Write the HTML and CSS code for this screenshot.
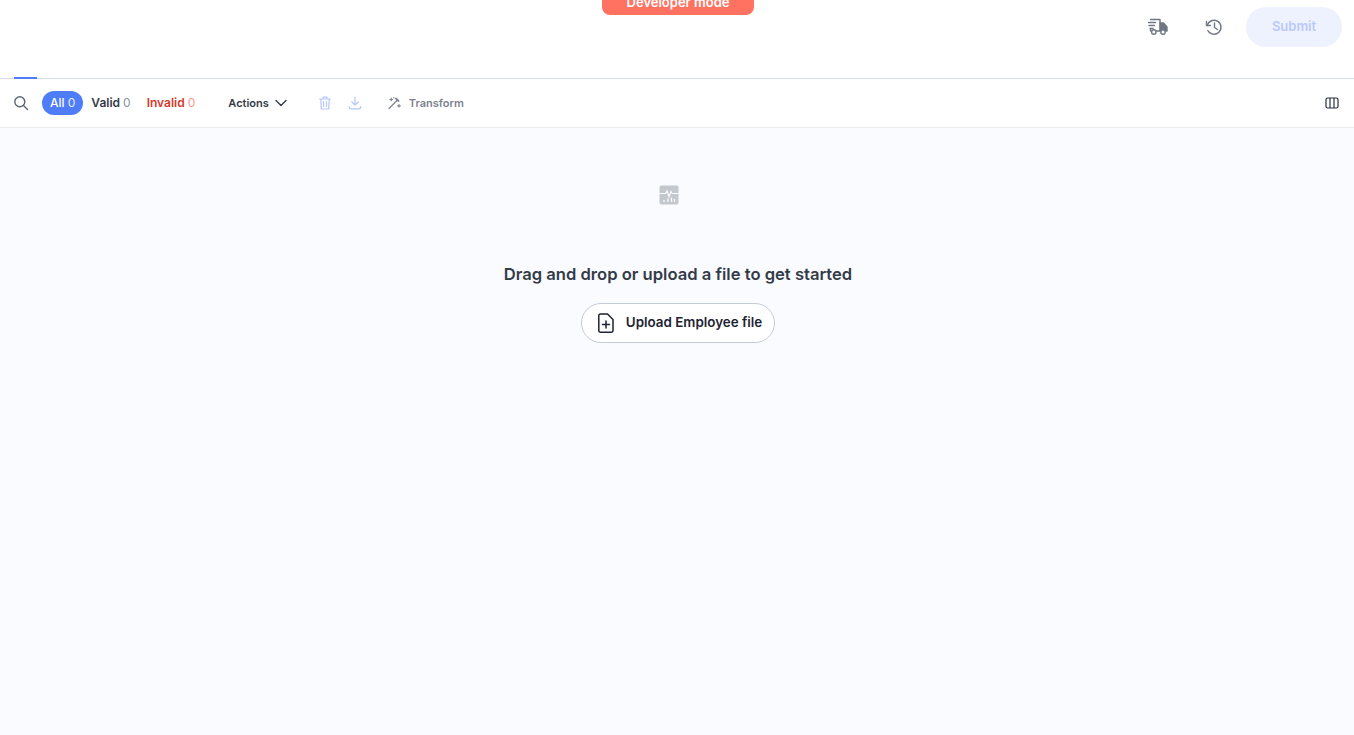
FILE: index.html
```html
<!DOCTYPE html>
<html lang="en">
<head>
  <meta charset="UTF-8" />
  <title>Employee import</title>
  <link rel="stylesheet" href="styles.css">
</head>
<body>
  <div class="dev-badge">Developer mode</div>

  <header class="topbar">
    <span class="tab-line"></span>
    <button class="icon-btn" title="Shipments">
      <svg width="22" height="22" viewBox="0 0 22 22" fill="none" stroke="#6f7785" stroke-width="1.4" stroke-linecap="round" stroke-linejoin="round">
        <path d="M3.500 3.500h9.500v11.500H9.500"/>
        <path d="M1.500 6.500h7M2 9.500h5.500M3 12.500h3M3.500 13v2"/>
        <path d="M13 7h3.500l3.500 4v4h-1.500h-5z" fill="#6f7785"/>
        <circle cx="6.800" cy="16" r="2.200" fill="#fff"/>
        <circle cx="16" cy="16" r="2.200" fill="#fff"/>
      </svg>
    </button>
    <button class="icon-btn history" title="History">
      <svg width="20" height="20" viewBox="0 0 20 20" fill="none" stroke="#6f7785" stroke-width="1.4" stroke-linecap="round" stroke-linejoin="round">
        <path d="M3.200 8.500a7 7 0 1 1 .6 5"/>
        <path d="M2.500 4.500v4h4"/>
        <path d="M10.500 6v4.500l3 2"/>
      </svg>
    </button>
    <button class="submit-btn" disabled>Submit</button>
  </header>

  <div class="toolbar">
    <svg class="search-icon" width="16" height="16" viewBox="0 0 16 16" fill="none" stroke="#5d6675" stroke-width="1.4" stroke-linecap="round">
      <circle cx="6.800" cy="6.800" r="5"/>
      <path d="M10.500 10.500l4 4"/>
    </svg>
    <div class="filters">
      <span class="filter active">All <b>0</b></span>
      <span class="filter">Valid <b>0</b></span>
      <span class="filter invalid">Invalid <b>0</b></span>
    </div>
    <div class="actions">
      Actions
      <svg width="14" height="14" viewBox="0 0 14 14" fill="none" stroke="#343b48" stroke-width="1.4" stroke-linecap="round" stroke-linejoin="round">
        <path d="M2 4.500l5 5 5-5"/>
      </svg>
    </div>
    <svg class="tool trash" width="14" height="14" viewBox="0 0 14 14" fill="none" stroke="#b5c6fb" stroke-width="1.200" stroke-linecap="round" stroke-linejoin="round">
      <path d="M1.500 3h11M5 3V1.200h4V3M2.800 3l.5 10h7.400l.5-10M5.500 5.500v5M8.500 5.500v5"/>
    </svg>
    <svg class="tool download" width="14" height="14" viewBox="0 0 14 14" fill="none" stroke="#b5c6fb" stroke-width="1.200" stroke-linecap="round" stroke-linejoin="round">
      <path d="M7 1v8M3.800 6L7 9.200 10.200 6M1.200 10.500c0 1.500.8 2.300 2 2.300h7.600c1.200 0 2-.8 2-2.300"/>
    </svg>
    <div class="transform">
      <svg width="14" height="14" viewBox="0 0 14 14" fill="none" stroke="#80838f" stroke-width="1.200" stroke-linecap="round">
        <path d="M2 12.500L10 4.500"/>
        <path d="M9 2.500l2.500 2.500" stroke-width="1.800"/>
        <path d="M3 3.500h2.500M4.200 2.200v2.500M12 8.500v2.500M10.800 9.800h2.500M6.500 1.800h.5"/>
      </svg>
      Transform
    </div>
    <svg class="columns-icon" width="14" height="12" viewBox="0 0 14 12" fill="none" stroke="#2a3040" stroke-width="1.200">
      <rect x="1" y="1" width="12" height="10" rx="1.500"/>
      <path d="M5 1v10M9 1v10"/>
    </svg>
  </div>

  <main class="empty-state">
    <svg class="empty-icon" width="20" height="20" viewBox="0 0 20 20">
      <rect width="19" height="19" x=".5" y=".5" rx="2" fill="#c3c7ce"/>
      <path d="M0 8.500h6.500l1.500-2.500 2 5.500 2-5 1.200 2h6.800" fill="none" stroke="#fafbfe" stroke-width="1.200"/>
      <path d="M5 17v-2M9 17v-3.500M12.500 17v-4.500M15.500 17v-3" stroke="#fafbfe" stroke-width="1.300"/>
    </svg>
    <h2>Drag and drop or upload a file to get started</h2>
    <button class="upload-btn">
      <svg width="20" height="22" viewBox="0 0 20 22" fill="none" stroke="#1e2333" stroke-width="1.500" stroke-linecap="round" stroke-linejoin="round">
        <path d="M4.500 2h7l5.500 5.500v11a1.700 1.700 0 0 1-1.700 1.700H4.500a1.700 1.700 0 0 1-1.700-1.700V3.700A1.700 1.700 0 0 1 4.500 2z"/>
        <path d="M10 9v7M6.500 12.500h7"/>
      </svg>
      <span class="upload-label">Upload Employee file</span>
    </button>
  </main>
</body>
</html>
```

FILE: styles.css
```css
* {
  box-sizing: border-box;
}

html, body {
  height: 100%;
}

body {
  margin: 0;
  display: flex;
  flex-direction: column;
  font-family: Inter, 'Open Sans', sans-serif;
  color: #343b48;
  background: #fff;
  overflow: hidden;
}

button {
  font-family: inherit;
  border: none;
  background: none;
  padding: 0;
}

.dev-badge {
  position: absolute;
  top: -9px;
  left: 602px;
  width: 152px;
  height: 24px;
  line-height: 22px;
  text-align: center;
  background: #ff7262;
  color: #fff;
  font-size: 13px;
  font-weight: 600;
  border-radius: 0 0 8px 8px;
}

.topbar {
  position: relative;
  height: 79px;
  flex: none;
  display: flex;
  justify-content: flex-end;
  align-items: flex-start;
  padding: 7px 12px 0 0;
  border-bottom: 1px solid #d3dce8;
}

.tab-line {
  position: absolute;
  left: 14px;
  bottom: -1px;
  width: 23px;
  height: 2px;
  background: #4f7cf7;
}

.icon-btn {
  display: flex;
  align-items: center;
  justify-content: center;
  width: 22px;
  height: 40px;
  margin-right: 34px;
}

.icon-btn.history {
  margin-right: 21px;
}

.submit-btn {
  width: 96px;
  height: 40px;
  padding-bottom: 3px;
  border-radius: 20px;
  background: #eef2fe;
  color: #b9c9fb;
  font-size: 13px;
  font-weight: 600;
}

.toolbar {
  height: 49px;
  flex: none;
  display: flex;
  align-items: center;
  padding: 0 15px 0 13px;
  font-size: 11px;
  border-bottom: 1px solid #eceef3;
}

.search-icon {
  margin-right: 13px;
}

.filters {
  display: flex;
  align-items: center;
  font-weight: 600;
  font-size: 12px;
}

.filter {
  height: 24px;
  line-height: 24px;
  padding: 0 8px;
  border-radius: 12px;
  white-space: nowrap;
}

.filter b {
  font-weight: 400;
  color: #8a909c;
}

.filter.active {
  background: #4f7cf7;
  color: #fff;
  font-weight: 500;
}

.filter.active b {
  color: #e4ebfe;
}

.filter.invalid {
  color: #d5392c;
}

.filter.invalid b {
  color: #f59a92;
}

.actions {
  display: flex;
  align-items: center;
  gap: 5px;
  margin-left: 25px;
  font-size: 11px;
  font-weight: 600;
  margin-top: -1px;
}

.tool {
  flex: none;
}

.tool.trash {
  margin-left: 30px;
}

.tool.download {
  margin-left: 16px;
}

.transform {
  display: flex;
  align-items: center;
  gap: 8px;
  margin-left: 25px;
  color: #80838f;
  font-size: 11px;
  font-weight: 600;
  margin-top: -1px;
}

.columns-icon {
  margin-left: auto;
}

.empty-state {
  flex: 1;
  background: #fafbfe;
  display: flex;
  flex-direction: column;
  align-items: center;
  padding: 57px 0 0 2px;
}

.empty-icon {
  margin-left: -19px;
}

.empty-state h2 {
  margin: 57px 0 17px;
  font-size: 16.600px;
  line-height: 24px;
  font-weight: 600;
  color: #343b48;
}

.upload-btn {
  display: flex;
  align-items: center;
  gap: 10px;
  height: 40px;
  padding: 0 12px 0 14px;
  background: #fff;
  border: 1px solid #c3cbd8;
  border-radius: 20px;
  color: #1e2333;
  font-size: 13.400px;
  font-weight: 600;
}

.upload-label {
  margin-top: -2px;
}
```
